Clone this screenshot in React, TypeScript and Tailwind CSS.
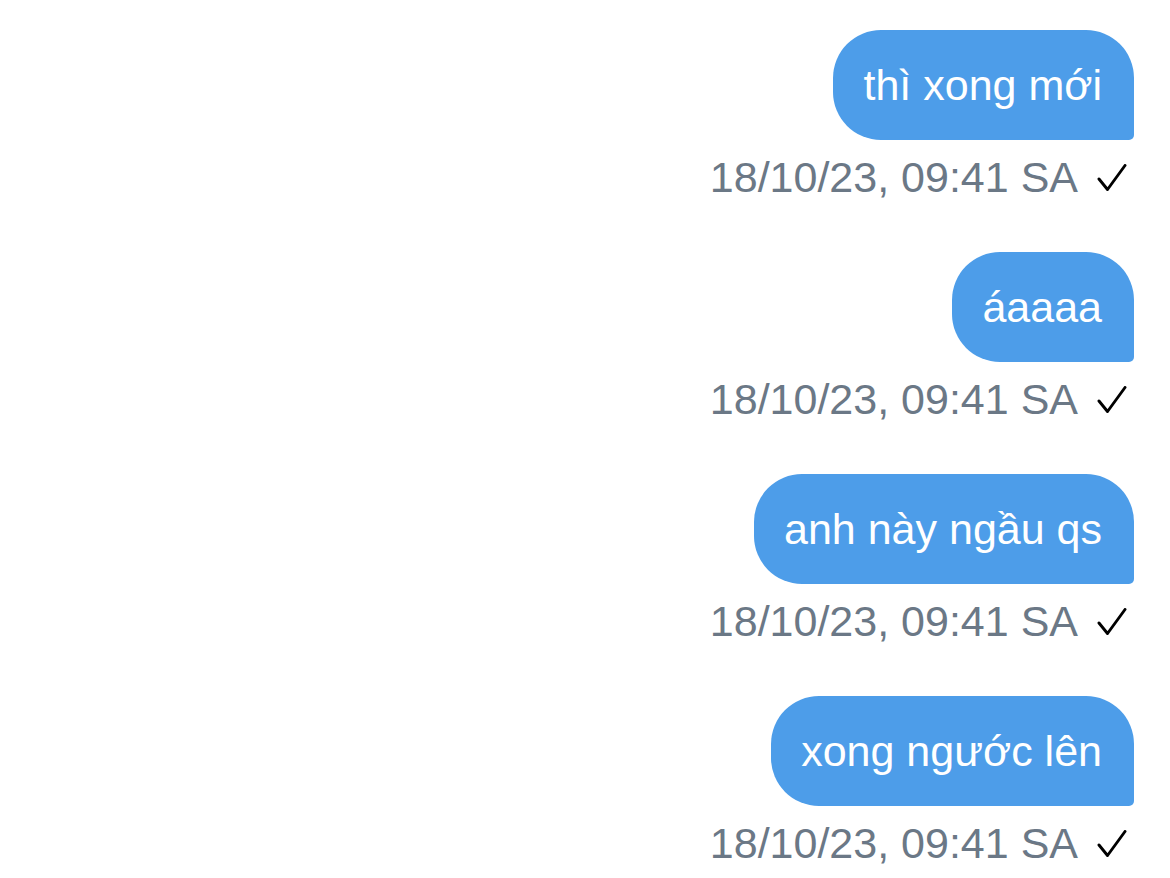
import React from "react";

const messages = [
  { id: 1, text: "thì xong mới", time: "18/10/23, 09:41 SA" },
  { id: 2, text: "áaaaa", time: "18/10/23, 09:41 SA" },
  { id: 3, text: "anh này ngầu qs", time: "18/10/23, 09:41 SA" },
  { id: 4, text: "xong ngước lên", time: "18/10/23, 09:41 SA" },
];

function Check() {
  return (
    <svg width="30" height="28" viewBox="0 0 30 28" fill="none" className="shrink-0">
      <path
        d="M2 15 L10.5 25.5 L28 1.5"
        stroke="#000"
        strokeWidth="2.9"
        strokeLinecap="round"
        strokeLinejoin="round"
      />
    </svg>
  );
}

export default function App() {
  return (
    <div
      className="w-[1170px] h-[878px] bg-white overflow-hidden pt-[30px] pr-[36px] flex flex-col items-end"
      style={{ fontFamily: '"Liberation Sans", Arial, sans-serif' }}
    >
      {messages.map((m) => (
        <div key={m.id} className="flex flex-col items-end mb-[53px]">
          <div className="h-[110px] flex items-center pl-[30px] pr-8 bg-[#4d9de9] text-white text-[43px] leading-[43px] rounded-tl-[48px] rounded-tr-[48px] rounded-bl-[48px] rounded-br-[5px]">
            {m.text}
          </div>
          <div className="mt-4 h-[43px] flex items-center gap-[19px] pr-[7px]">
            <span className="text-[43px] leading-[43px] text-[#6b7886]">{m.time}</span>
            <Check />
          </div>
        </div>
      ))}
    </div>
  );
}
